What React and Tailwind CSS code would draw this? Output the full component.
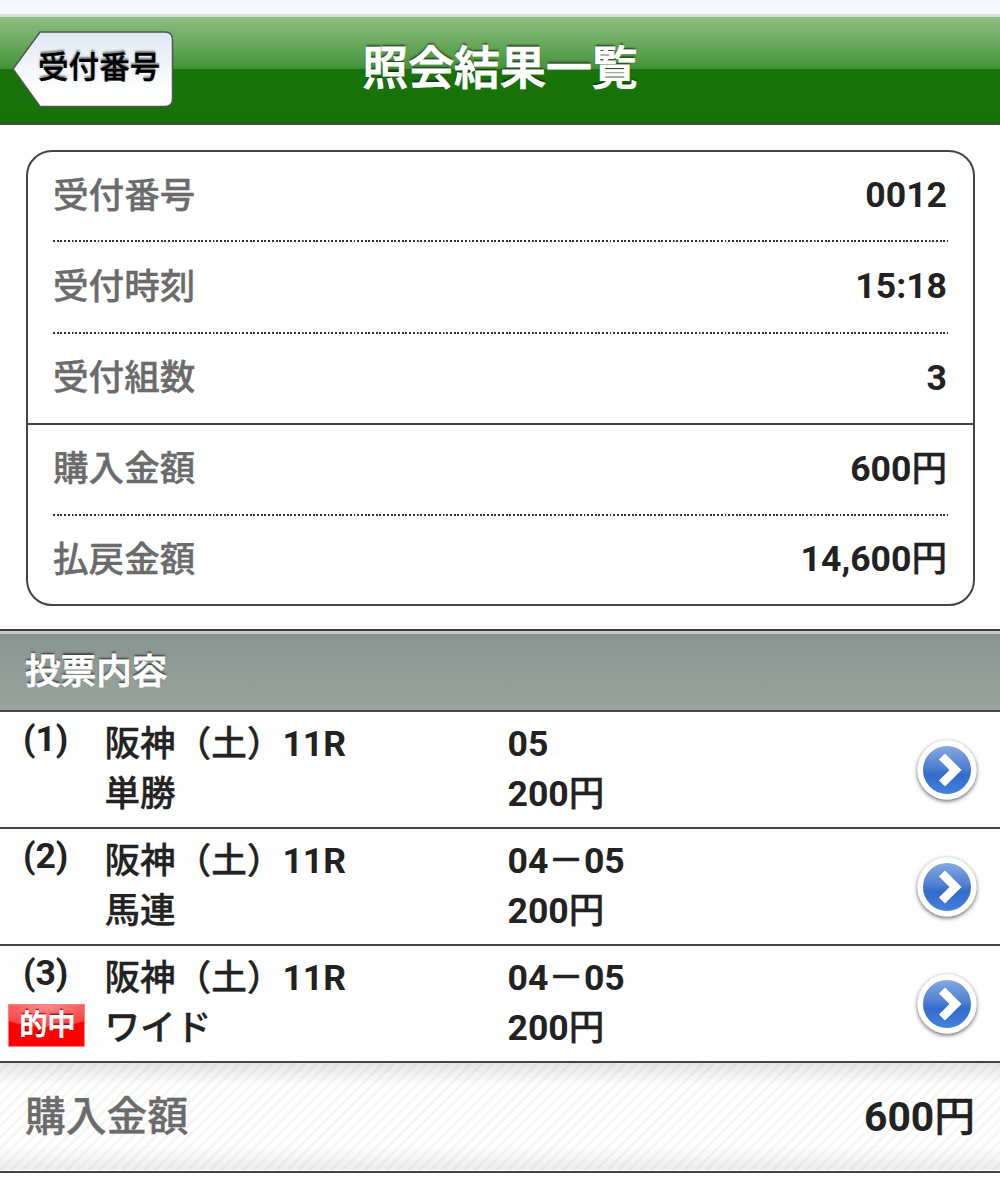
const INK = "text-[#222222]";

// Splits a string so Japanese glyphs and Latin digits each get their own face.
function Mixed({ children }) {
  return children.split(/([\x20-\x7e]+)/).filter(Boolean).map((part, i) =>
    /^[\x20-\x7e]/.test(part) ? (
      <span key={i} className="font-['Roboto','Noto_Sans_CJK_JP',sans-serif] font-bold [-webkit-text-stroke:0px]">{part}</span>
    ) : (
      <span key={i}>{part}</span>
    )
  );
}

function Dots() {
  return (
    <div className="mx-[25px] h-[2px] bg-[repeating-linear-gradient(90deg,#333_0px,#333_1.9px,#fff_2px,#fff_3.71px)]" />
  );
}

function SummaryRow({ label, value, className }) {
  return (
    <div className={`flex items-center justify-between pl-[25px] pr-[26px] text-[35.6px] leading-none ${className}`}>
      <span className="pb-[7px] text-[#6b6b6b]">{label}</span>
      <span className={`pb-[4px] ${INK}`}><Mixed>{value}</Mixed></span>
    </div>
  );
}

function Arrow() {
  return (
    <svg viewBox="0 0 72 72" className="h-[72px] w-[72px] overflow-visible">
      <defs>
        <linearGradient id="blue" x1="0" y1="0" x2="0" y2="1">
          <stop offset="0" stopColor="#85a9e2" />
          <stop offset="0.45" stopColor="#4f80d2" />
          <stop offset="0.6" stopColor="#336bca" />
          <stop offset="1" stopColor="#4482e0" />
        </linearGradient>
        <filter id="shade" x="-30%" y="-30%" width="160%" height="160%">
          <feDropShadow dx="0" dy="1.5" stdDeviation="2.2" floodColor="#000" floodOpacity="0.65" />
        </filter>
      </defs>
      <circle cx="36" cy="36" r="29.5" fill="#fff" filter="url(#shade)" />
      <circle cx="36" cy="36" r="24" fill="url(#blue)" />
      <path d="M31 22.5 L44.5 36 L31 49.500" fill="none" stroke="#fff" strokeWidth="8.500" />
    </svg>
  );
}

const bets = [
  { no: "(1)", race: "阪神（土）11R", type: "単勝", pick: "05", hit: false },
  { no: "(2)", race: "阪神（土）11R", type: "馬連", pick: "04－05", hit: false },
  { no: "(3)", race: "阪神（土）11R", type: "ワイド", pick: "04－05", hit: true },
];

function Bet({ bet }) {
  return (
    <div className={`flex h-[117px] border-b-2 border-[#444] text-[35.6px] leading-[50px] ${INK}`}>
      <div className="w-[104.5px] shrink-0">
        <div className="h-[50px] pl-[23px] leading-[48px]"><Mixed>{bet.no}</Mixed></div>
        {bet.hit && (
          <div className="ml-[8px] mt-[8px] flex h-[43px] w-[77px] items-center justify-center border border-[#ff8080] bg-[radial-gradient(ellipse_75%_55%_at_50%_0%,#ff8d8d_0%,#ff4444_94%,#ff0000_100%)] pb-[5px] pl-[2px] text-[28px] leading-none text-white [-webkit-text-stroke:0.8px] [text-shadow:0_-2px_1px_rgba(70,0,0,0.65)]">
            的中
          </div>
        )}
      </div>
      <div className="w-[403px] shrink-0 whitespace-nowrap pt-[4px]">
        <div className="h-[50px]"><Mixed>{bet.race}</Mixed></div>
        <div className="h-[50px]">{bet.type}</div>
      </div>
      <div className="flex-1 pt-[4px]">
        <div className="h-[50px]"><Mixed>{bet.pick}</Mixed></div>
        <div className="h-[50px]"><Mixed>200円</Mixed></div>
      </div>
      <div className="mr-[17px] flex items-center"><Arrow /></div>
    </div>
  );
}

export default function App() {
  return (
    <div className="min-h-[1200px] w-[1000px] bg-[#fefefe] font-['Noto_Sans_CJK_JP',sans-serif] font-medium [-webkit-text-stroke:0.35px]">
      <div className="h-[14px] bg-[#f7f8fd]" />
      <header className="grid h-[111px] grid-cols-[1fr_auto_1fr] border-b-2 border-t-[3px] border-b-[#3d5538] border-t-[#d8e2d7] bg-[linear-gradient(180deg,#8bbd82_0px,#71ad64_22px,#45923a_51.5px,#187409_52.5px,#187009_106px)]">
        <div className="pl-[12px] pt-[13px]">
          <div className="grid h-[78px] w-[162px]">
            <svg viewBox="0 0 162 78" className="col-start-1 row-start-1 h-[78px] w-[162px]">
              <defs>
                <linearGradient id="back" x1="0" y1="0" x2="0" y2="1">
                  <stop offset="0" stopColor="#dfe8f4" />
                  <stop offset="0.8" stopColor="#fff" />
                </linearGradient>
              </defs>
              <path d="M28 2 H153 Q160.5 2 160.5 10 V69 Q160.5 76.500 153 76.500 H28 L1 39 Z" fill="url(#back)" stroke="#4c5a4a" strokeWidth="1.500" />
            </svg>
            <span className="col-start-1 row-start-1 pl-[26px] pt-[20px] text-[30.6px] leading-none text-black [text-shadow:0_-2px_2px_rgba(0,0,0,0.5)]">受付番号</span>
          </div>
        </div>
        <h1 className="pt-[25px] text-[45.9px] leading-none text-white [-webkit-text-stroke:1px] [text-shadow:0_-2px_2px_rgba(0,0,0,0.6)]">照会結果一覧</h1>
        <div />
      </header>

      <section className="ml-[26px] mr-[25px] mt-[25px] h-[456px] rounded-[26px] border-2 border-[#444] bg-white">
        <SummaryRow className="h-[88px]" label="受付番号" value="0012" />
        <Dots />
        <SummaryRow className="h-[90px]" label="受付時刻" value="15:18" />
        <Dots />
        <SummaryRow className="h-[89px]" label="受付組数" value="3" />
        <div className="h-[2px] bg-[#444]" />
        <SummaryRow className="h-[89px]" label="購入金額" value="600円" />
        <Dots />
        <SummaryRow className="h-[88px]" label="払戻金額" value="14,600円" />
      </section>

      <div className="mt-[23px] h-[2px] bg-[#3c3c3c]" />
      <h2 className="flex h-[81px] items-center border-b-2 border-t-[3px] border-b-[#444] border-t-[#c5cac8] bg-[linear-gradient(180deg,#899490,#9aa59f)] pb-[6px] pl-[25px] text-[35.6px] leading-none text-white [-webkit-text-stroke:0.8px] [text-shadow:0_-2px_2px_rgba(0,0,0,0.6)]">
        投票内容
      </h2>

      {bets.map((bet) => <Bet key={bet.no} bet={bet} />)}

      <div className="flex h-[110px] items-center justify-between border-b-2 border-[#444] bg-[linear-gradient(180deg,rgba(0,0,0,0.1)_0px,transparent_22px,transparent_82px,rgba(0,0,0,0.07)_107px,#fff_107px),repeating-linear-gradient(135deg,#fff_0px,#fff_4px,#f2f2f2_5.9px,#fff_7.8px)] px-[25px] text-[40.8px] leading-none">
        <span className="pb-[5px] text-[#6b6b6b]">購入金額</span>
        <span className={`pb-[3px] ${INK}`}><Mixed>600円</Mixed></span>
      </div>
    </div>
  );
}
